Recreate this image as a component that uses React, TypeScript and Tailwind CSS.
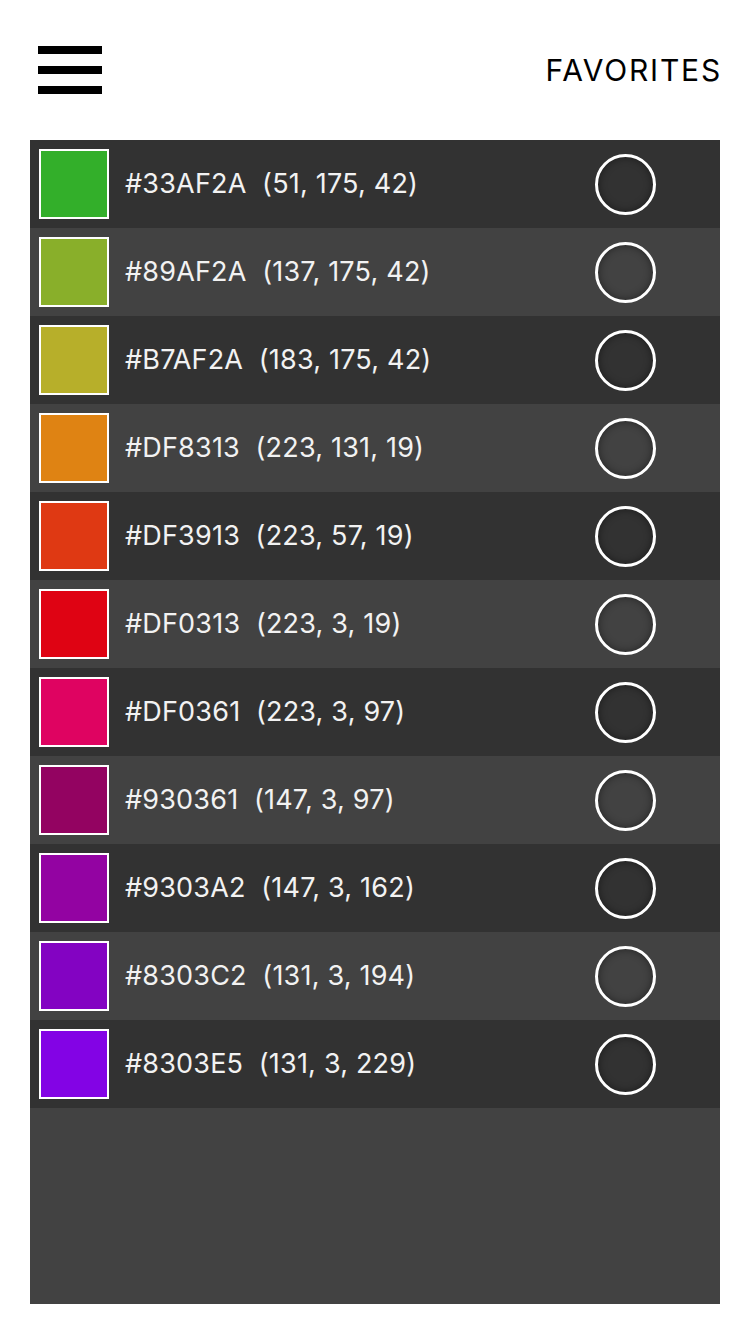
const colors = [
  { hex: "#33AF2A", rgb: "(51, 175, 42)" },
  { hex: "#89AF2A", rgb: "(137, 175, 42)" },
  { hex: "#B7AF2A", rgb: "(183, 175, 42)" },
  { hex: "#DF8313", rgb: "(223, 131, 19)" },
  { hex: "#DF3913", rgb: "(223, 57, 19)" },
  { hex: "#DF0313", rgb: "(223, 3, 19)" },
  { hex: "#DF0361", rgb: "(223, 3, 97)" },
  { hex: "#930361", rgb: "(147, 3, 97)" },
  { hex: "#9303A2", rgb: "(147, 3, 162)" },
  { hex: "#8303C2", rgb: "(131, 3, 194)" },
  { hex: "#8303E5", rgb: "(131, 3, 229)" },
];

export default function App() {
  return (
    <main
      className="w-[750px] h-[1334px] bg-white flex flex-col"
      style={{ fontFamily: "Inter, 'Noto Sans', sans-serif" }}
    >
      <header className="h-[140px] flex items-start justify-between px-[30px]">
        <button className="mt-[46px] ml-[8px] flex flex-col gap-[12px]">
          <span className="block w-[64px] h-[8px] bg-black" />
          <span className="block w-[64px] h-[8px] bg-black" />
          <span className="block w-[64px] h-[8px] bg-black" />
        </button>
        <h1 className="mt-[49px] text-[30px] leading-[42px] text-black tracking-[1.8px] mr-[-2px]">
          FAVORITES
        </h1>
      </header>

      <section className="mx-[30px] mb-[30px] flex-1 bg-[#424242] flex flex-col">
        {colors.map((c, i) => (
          <div
            key={c.hex}
            className={
              "h-[88px] flex items-center pl-[9px] " +
              (i % 2 === 0 ? "bg-[#323232]" : "bg-[#424242]")
            }
          >
            <div
              className="w-[70px] h-[70px] border-2 border-white"
              style={{ backgroundColor: c.hex }}
            />
            <p className="ml-[16px] w-[440px] text-[27px] tracking-[0.2px] text-[#f2f2f2] whitespace-pre">
              {c.hex + "  " + c.rgb}
            </p>
            <div className="ml-[30px] w-[61px] h-[61px] rounded-full border-[3px] border-white shadow-[inset_0_0_8px_rgba(0,0,0,0.45)]" />
          </div>
        ))}
      </section>
    </main>
  );
}
